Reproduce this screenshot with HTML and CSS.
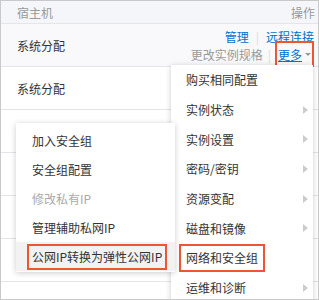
FILE: index.html
```html
<!DOCTYPE html>
<html lang="zh-CN">
<head>
    <meta charset="UTF-8">
    <meta name="viewport" content="width=device-width, initial-scale=1.0">
    <title>实例列表 - 更多操作</title>
    <link rel="stylesheet" href="styles.css">
</head>
<body>
    <div class="frame">
        <!-- Table header -->
        <div class="thead">
            <span>宿主机</span>
            <span>操作</span>
        </div>

        <!-- Instance rows (the lower ones sit under the open menus) -->
        <div class="row row-hover">
            <div class="host">系统分配</div>
            <div class="ops">
                <div class="ops-line"><a href="#">管理</a><span class="sep">|</span><a href="#">远程连接</a></div>
                <div class="ops-line line2"><span class="muted">更改实例规格</span><span class="sep">|</span><span class="more mark"><a href="#" class="more-link">更多</a><i class="caret"></i></span></div>
            </div>
        </div>
        <div class="row">
            <div class="host">系统分配</div>
        </div>
        <div class="row"></div>
        <div class="row"></div>
        <div class="row"></div>
        <div class="row"></div>

        <!-- "More" dropdown -->
        <ul class="menu main-menu">
            <li>购买相同配置</li>
            <li class="has-sub">实例状态</li>
            <li class="has-sub">实例设置</li>
            <li class="has-sub">密码/密钥</li>
            <li class="has-sub">资源变配</li>
            <li class="has-sub">磁盘和镜像</li>
            <li><span class="mark mark-main">网络和安全组</span></li>
            <li class="has-sub">运维和诊断</li>
        </ul>

        <!-- Submenu of 网络和安全组 -->
        <ul class="menu sub-menu">
            <li>加入安全组</li>
            <li>安全组配置</li>
            <li class="disabled">修改私有IP</li>
            <li>管理辅助私网IP</li>
            <li class="active"><span class="mark mark-sub">公网IP转换为弹性公网IP</span></li>
        </ul>
    </div>
</body>
</html>
```

FILE: styles.css
```css
/* Basic page settings */
body {
    margin: 0;
    font-family: "Noto Sans CJK SC", "Liberation Sans", sans-serif;
    font-size: 12px;
    color: #333;
}

a {
    color: #0070cc;
    text-decoration: none;
}

/* Screenshot frame */
.frame {
    position: relative;
    width: 319px;
    height: 300px;
    box-sizing: border-box;
    border: 1px solid #c9c9c9;
    overflow: hidden;
    background: #fff;
}

/* Table header */
.thead {
    display: flex;
    justify-content: space-between;
    align-items: center;
    height: 22px;
    padding: 0 3px 0 16px;
    background: #f5f6fa;
    border-bottom: 1px solid #e3e5ea;
    color: #999;
}

/* Table rows */
.row {
    display: flex;
    justify-content: space-between;
    align-items: center;
    height: 42px;
    padding: 0 4px 0 16px;
    border-bottom: 1px solid #e3e5ea;
}

.row-hover {
    background: #f9f9fb;
}

.ops {
    display: flex;
    flex-direction: column;
    align-items: flex-end;
}

.ops-line {
    display: flex;
    align-items: center;
    height: 18px;
}

.sep {
    color: #ddd;
    margin: 0 7px;
}

.line2 .sep {
    margin: 0 4px 0 5px;
}

.muted {
    color: #999;
}

/* "More" trigger */
.more {
    display: flex;
    align-items: center;
    height: 26px;
    box-sizing: border-box;
    padding: 0 1px;
    border: 2px solid transparent;
}

.more-link {
    text-decoration: underline;
}

.caret {
    width: 0;
    height: 0;
    margin: 1px 0 0 3px;
    border-left: 3px solid transparent;
    border-right: 3px solid transparent;
    border-top: 3px solid #999;
}

/* Red annotation boxes */
.mark {
    border-color: #ef5530;
}

.mark-main,
.mark-sub {
    display: block;
    border: 2px solid #ef5530;
    box-sizing: border-box;
}

.mark-main {
    height: 28px;
    line-height: 24px;
    padding: 0 5px;
    margin-left: -7px;
}

.mark-sub {
    height: 26px;
    line-height: 22px;
    padding: 0 3px;
    margin-left: -5px;
}

/* Dropdown menus */
.menu {
    position: absolute;
    margin: 0;
    padding: 0;
    list-style: none;
    background: #fff;
    box-shadow: 0 1px 6px rgba(0, 0, 0, 0.2);
}

.menu li {
    display: flex;
    align-items: center;
    justify-content: space-between;
}

.main-menu {
    left: 170px;
    top: 64px;
    width: 142px;
}

.main-menu li {
    height: 29.7px;
    padding: 0 5px 0 15px;
}

.has-sub::after {
    content: "";
    border-left: 5px solid #ccc;
    border-top: 4px solid transparent;
    border-bottom: 4px solid transparent;
}

.sub-menu {
    left: 15px;
    top: 122px;
    width: 159px;
    padding: 3px 0 1px;
}

.sub-menu li {
    height: 29px;
    padding-left: 16px;
}

.sub-menu .disabled {
    color: #aaa;
}

.sub-menu .active {
    background: #f2f2f2;
}
```
